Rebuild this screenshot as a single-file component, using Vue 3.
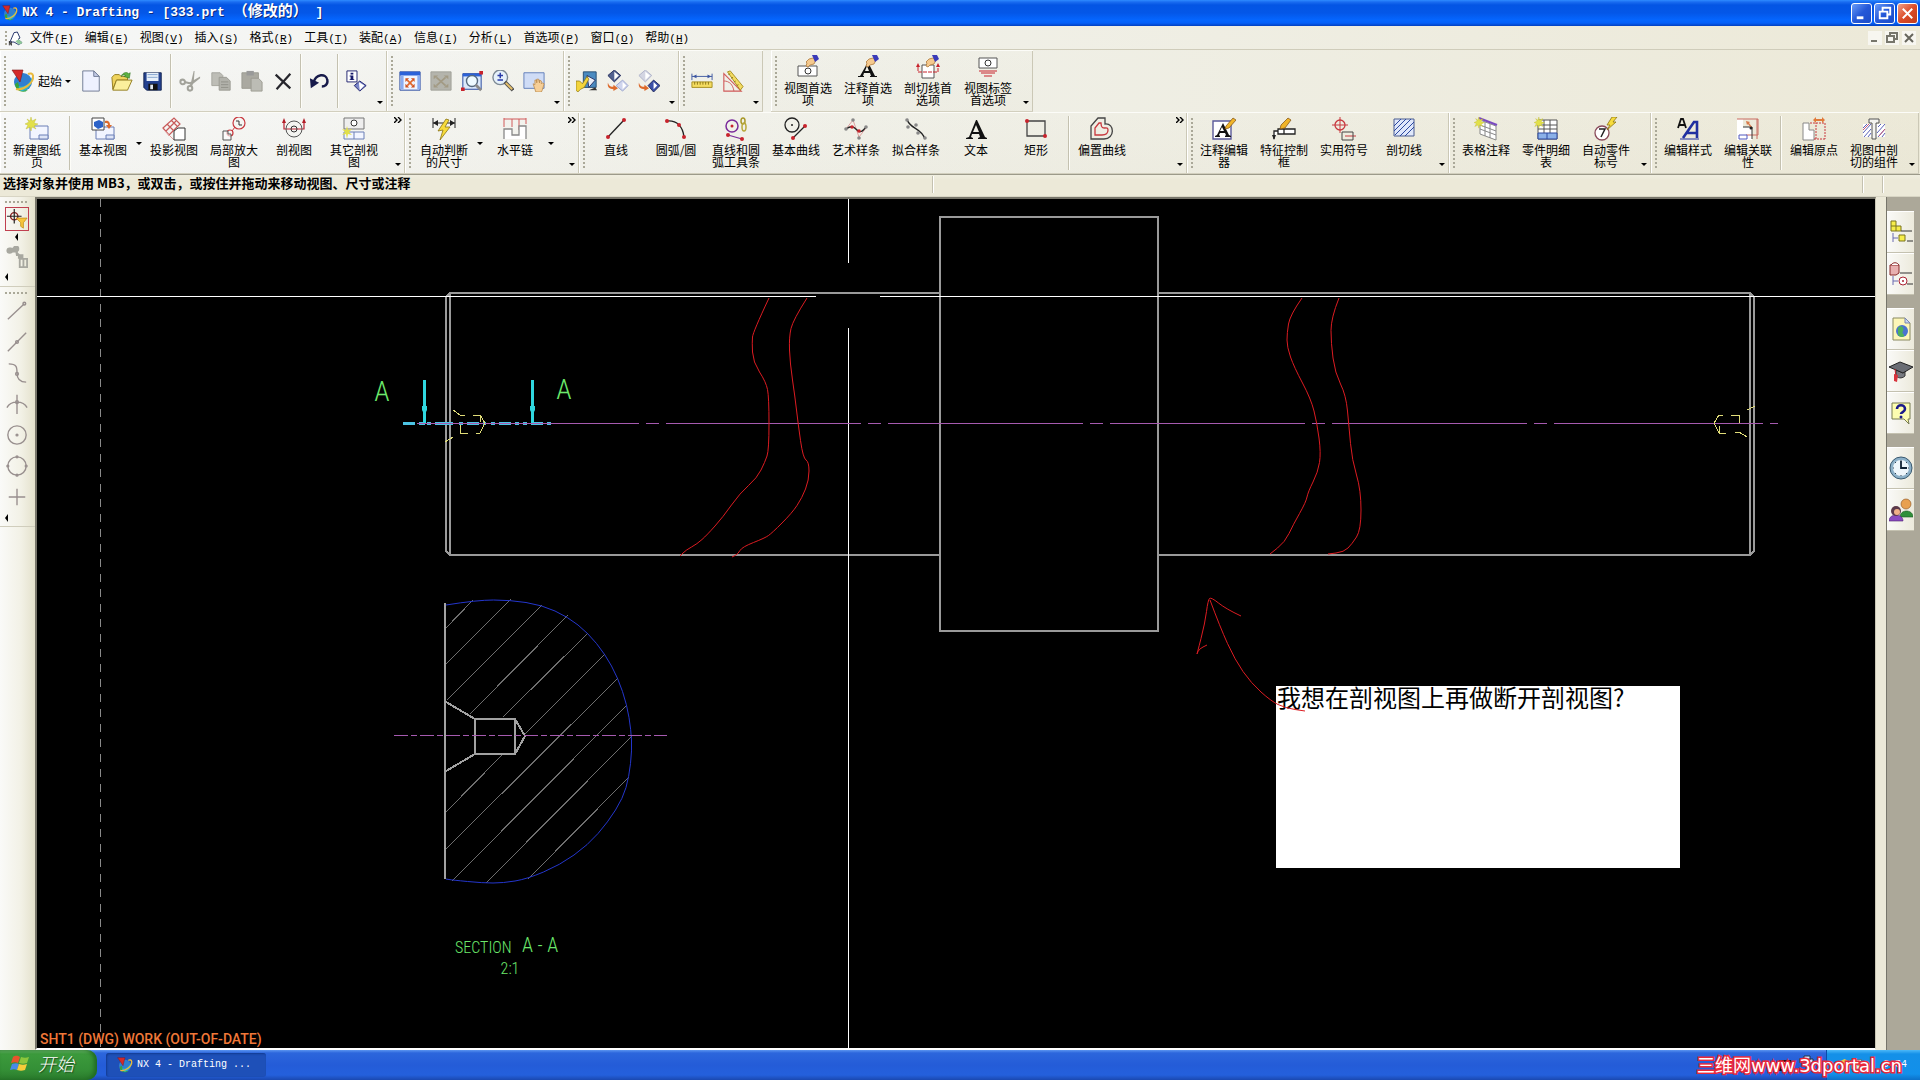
<script setup>
const menus = [
  ['文件', 'F'], ['编辑', 'E'], ['视图', 'V'], ['插入', 'S'], ['格式', 'R'], ['工具', 'T'],
  ['装配', 'A'], ['信息', 'I'], ['分析', 'L'], ['首选项', 'P'], ['窗口', 'O'], ['帮助', 'H'],
]

const hand = '<path d="M10 7l3-3 4-1 3 2-2 4-4 1-2 2-2-1 1-3z" fill="#f5c98e" stroke="#b07a3a" stroke-width=".8"/><path d="M16 0l5 0 2 4-4 3z" fill="#3a3ab8"/>'
const spark = '<path d="M6 0l1 4 4-2-2 4 4 1-4 2 2 3-4-2-1 4-1-4-4 2 2-4-3-1 4-2-2-3 3 2z" fill="#e2e04a" stroke="#b9b62e" stroke-width=".4"/>'
const bolt = 'fill="#f7dc3c" stroke="#8a7414" stroke-width=".8"'
const swoosh = '<circle cx="12" cy="13" r="9" fill="#2f7fd0"/><path d="M4 15a8 8 0 0 0 13 6c-5 1-9-2-10-8z" fill="#37a53c"/><path d="M8 17c5 2 11-2 13-9 1 7-4 13-9 14-3 0-5-2-4-5z" fill="#2db5c8"/><path d="M5 20C12 22 23 14 22 7c0-3-3-3-5-2" fill="none" stroke="#e9b93c" stroke-width="2"/><path d="M1 1l11 0-3 12z" fill="#d42a2a" stroke="#7d1414" stroke-width=".6"/>'

const icons = {
  nx: swoosh,
  app: '<path d="M3 18L9 4l5-1 4 9-3 2 6 5-5 3-7-4z" fill="#fff" stroke="#2c3a6e" stroke-width="1.5"/><path d="M11 17l5-3 6 5-5 3z" fill="#8fc79a"/><path d="M2 17v6M2 17l3 6v-6" fill="none" stroke="#111" stroke-width="1.2"/>',
  new: '<path d="M3 1h12l6 6v16H3z" fill="#eef1ff" stroke="#6b7690"/><path d="M15 1v6h6z" fill="#c4cce8" stroke="#6b7690"/>',
  open: '<path d="M1 8l3-3h5l2 2h7v4H6L2 21z" fill="#efd35c" stroke="#8f7a1c"/><path d="M6 11h17l-5 11H2z" fill="#fbef9c" stroke="#8f7a1c"/><path d="M11 7c2-5 7-5 8-3l2-1-1 6-6-2 2-1c-1-1-3-1-5 1z" fill="#5db143" stroke="#2f7420" stroke-width=".6"/>',
  save: '<path d="M2 3h19v19H5l-3-3z" fill="#23418f" stroke="#14244f"/><path d="M5 3h13v9H5z" fill="#e8f0fa"/><path d="M6 5h11M6 8h11" stroke="#7fa0cc"/><path d="M7 15h10v7H7z" fill="#111"/><path d="M9 16h3v5H9z" fill="#dfe6ef"/>',
  cut: '<path d="M13 14L16 1l1 0-1 13zM11 14l12-7 0 2-10 8z" fill="#a3a39b"/><g fill="none" stroke="#a3a39b" stroke-width="2.200"><path d="M6 13l8 2-1 3"/><circle cx="4" cy="13" r="2.500"/><circle cx="12" cy="20" r="2.500"/></g>',
  copy: '<path d="M2 3h9l3 3v11H2z" fill="#bdbdb6" stroke="#a3a39b"/><path d="M10 8h8l4 4v10H10z" fill="#b2b2ab" stroke="#999992"/><path d="M12 13h8M12 16h8M12 19h8" stroke="#8f8f88"/>',
  paste: '<path d="M1 3h18v17H1z" fill="#aaa9a1" stroke="#9a9991"/><path d="M6 1h8v5H6z" fill="#999"/><path d="M11 9h8l4 4v10H11z" fill="#bcbcb5" stroke="#9a9991"/>',
  del: '<path d="M4 5l16 15M20 4L5 21" stroke="#26262c" stroke-width="2.400" fill="none"/>',
  undo: '<path d="M5 14C7 4 19 3 20 11c1 5-3 7-6 7" fill="none" stroke="#171a4a" stroke-width="2.600"/><path d="M1 9l10 5-9 6z" fill="#171a4a"/>',
  info: '<path d="M1 1h11v12H1z" fill="#fff" stroke="#171a6a"/><path d="M5 3h3v2H5zM5 6h3v4h1v1H4v-1h1V7H4V6z" fill="#171a6a"/><path d="M15 12l7 5-7 6-6-6z" fill="#7a86c8" stroke="#171a6a"/><path d="M14 13l6 4-5 5z" fill="#fff"/>',
  fit: '<path d="M1 2h22v20H1z" fill="#eef4ff" stroke="#1c3f9a"/><path d="M1 2h22v4H1z" fill="#2c62d8"/><path d="M2 6h3v15H2zM20 6h3v15h-3z" fill="#8aacf0"/><path d="M9 11l6 6M15 11l-6 6" stroke="#e0672a" stroke-width="1.800"/><path d="M7 9h4l-4 4zM17 9h-4l4 4zM7 19h4l-4-4zM17 19h-4l4-4z" fill="#d0501c"/>',
  fitgray: '<path d="M1 2h22v20H1z" fill="#b4b4ac" stroke="#a0a098"/><path d="M7 8l10 9M17 8L7 17" stroke="#a29a84" stroke-width="2"/><path d="M4 6h5l-5 4zM20 6h-5l5 4zM4 19h5l-5-4zM20 19h-5l5-4z" fill="#a29a84"/>',
  zoomwin: '<path d="M2 4h20v17H2z" fill="#dbe9fb" stroke="#1c3f9a"/><path d="M2 4h20v3H2z" fill="#2c62d8"/><circle cx="12" cy="12" r="6" fill="#eefaff" stroke="#55697e" stroke-width="1.500"/><path d="M16 16l6 6" stroke="#8a8a8a" stroke-width="3"/><path d="M20 1h4v4h-4zM0 19h4v4H0z" fill="#c8232c"/>',
  zoom: '<circle cx="9" cy="8" r="8" fill="#e6f1fa" stroke="#7c8894" stroke-width="1.500"/><path d="M9 3v6M6 6h6M6 11h6" stroke="#2a3ba8" stroke-width="1.600"/><path d="M14 13l9 9" stroke="#555" stroke-width="4"/><path d="M15 14l7 7" stroke="#e8c16a" stroke-width="2"/>',
  pan: '<path d="M1 3h22v17H1z" fill="#cfdcf6" stroke="#5d7bb8"/><path d="M11 15l2 1V11l2 0 0 3V10l2 0 1 4V11l2 1 0 3 1-1 2 1-2 7-1 2h-6z" fill="#f6cf98" stroke="#b88648" stroke-width=".8"/>',
  shade: '<path d="M8 2h14v17H8z" fill="#4a8ac0" stroke="#24496e"/><path d="M12 6l9 5-7 8z" fill="#e9eef8" stroke="#222c60"/><path d="M14 22l9 0-2-3" fill="#333"/><path d="M0 12l4 0 3 3 5-8 2 3-5 9-4 2-3 3-2-2z" fill="#f3d43c" stroke="#8a7414" stroke-width=".8"/>',
  rot1: '<path d="M8 0l7 6-7 7-7-7z" fill="#51608f" stroke="#20295a"/><path d="M8 2l5 4-5 5z" fill="#fff"/><path d="M17 11l6 6-6 6-7-6z" fill="#cfd5ee" stroke="#98a2cc"/><path d="M17 13l4 4-4 4z" fill="#fff"/><path d="M1 14c1 4 4 5 6 4v-2l5 4-5 3v-2c-4 0-7-2-6-7z" fill="#dd6a2c"/>',
  rot2: '<path d="M8 0l7 6-7 7-7-7z" fill="#d3d5e2" stroke="#adb1c8"/><path d="M8 2l5 4-5 5z" fill="#fff"/><path d="M17 11l7 6-7 7-6-7z" fill="#3c50a8" stroke="#20295a"/><path d="M17 13l4 4-4 4z" fill="#fff"/><path d="M1 14c1 4 4 5 6 4v-2l5 4-5 3v-2c-4 0-7-2-6-7z" fill="#dd6a2c"/>',
  ruler: '<path d="M1 4v7M23 4v7M1 7h22" stroke="#3a54a0" fill="none"/><path d="M2 7l4-2v4zM22 7l-4-2v4z" fill="#3a54a0"/><path d="M1 13h22v6H1z" fill="#f4dc62" stroke="#a48c1c"/><path d="M4 13v3M7 13v3M10 13v3M13 13v3M16 13v3M19 13v3" stroke="#8a7414"/>',
  angle: '<path d="M2 4v19h19z" fill="none" stroke="#d05a5a" stroke-width="1.200"/><path d="M2 12c6 0 10 4 11 11" fill="none" stroke="#d05a5a"/><path d="M6 2l3-1 14 17-3 4z" fill="#f4dc62" stroke="#a48c1c"/><path d="M9 4l-2 1M12 8l-2 1M15 12l-2 1M18 16l-2 1" stroke="#8a7414"/>',
  viewpref: '<path d="M2 11h19v10H2z" fill="#fff" stroke="#555"/><circle cx="12" cy="16" r="3" fill="none" stroke="#333"/>' + hand,
  notepref: '<path d="M2 22h6v-1l-1 0 1-3h6l1 3-1 0v1h7v-1l-2 0L12 7 4 21l-2 0zM9 16l2-5 2 5z" fill="#111"/>' + hand,
  secpref: '<path d="M6 10h12v13H6z" fill="#fff" stroke="#555"/><path d="M2 12v5h20v-5" fill="none" stroke="#c8232c" stroke-dasharray="4 1"/><path d="M0 12l2-4 2 4zM20 12l2-4 2 4z" fill="#c8232c"/>' + hand,
  lblpref: '<path d="M3 3h18v10H3z" fill="#fff" stroke="#555"/><circle cx="12" cy="8" r="3" fill="none" stroke="#333"/><path d="M3 16h18M5 18h14M8 21h8" stroke="#c8232c" stroke-width="1.200"/>',
  newsheet: '<path d="M5 9h18v13H5z" fill="#f2f5ff" stroke="#6a7fb6"/><path d="M14 18h9v4h-9z" fill="#dde4f6" stroke="#6a7fb6"/>' + spark,
  baseview: '<path d="M5 10h18v12H5z" fill="#f2f5ff" stroke="#6a7fb6"/><path d="M15 18h8v4h-8z" fill="#dde4f6" stroke="#6a7fb6"/><path d="M1 1h12v12H1z" fill="#fff" stroke="#444"/><path d="M3 5l5-2 4 2v5l-5 2-4-3z" fill="#2c62c8"/><path d="M14 4c4-1 5 2 5 4h2l-3 4-3-4h2c0-2-1-2-3-2z" fill="#dd6a2c"/>',
  projview: '<path d="M1 11L12 1l6 6L7 18zM5 7l6 6M9 3l6 6M4 14l10-10" fill="none" stroke="#c85a5a" stroke-width="1.200"/><path d="M1 12l11 11" stroke="#d99" /><path d="M12 23V14l4-3h7v12z" fill="#fff" stroke="#333"/>',
  detail: '<circle cx="17" cy="6" r="6" fill="none" stroke="#c8383e" stroke-width="1.200"/><path d="M14 4h3v4h3" fill="none" stroke="#333"/><circle cx="8" cy="16" r="3" fill="none" stroke="#c8383e" stroke-width="1.200"/><path d="M10 14l3-4" stroke="#c8383e"/><path d="M1 14h5v3h3v6H1z" fill="#fff" fill-opacity=".6" stroke="#555"/>',
  section: '<path d="M2 4v8h20V4" fill="none" stroke="#b23" stroke-width="1.200"/><path d="M0 6l2-5 2 5zM20 6l2-5 2 5z" fill="#b21e28"/><circle cx="12" cy="12" r="8" fill="none" stroke="#555"/><circle cx="12" cy="12" r="3" fill="none" stroke="#333"/>',
  othersec: '<path d="M2 1h20v11H2z" fill="#eee" stroke="#777"/><circle cx="12" cy="6" r="3" fill="#fff" stroke="#333"/><path d="M2 15h20v7H2zM12 15v7" fill="#f2f5ff" stroke="#6a7fb6"/><path d="M5 9l1 4 4-1-3 3 3 3-4-1-1 5-1-5-4 1 3-3-3-3 4 1z" fill="#e2e04a"/>',
  autodim: '<path d="M1 1v10M23 1v10M1 6h22" stroke="#222" fill="none"/><path d="M1 6l5-3v6zM23 6l-5-3v6z" fill="#222"/><path d="M14 2L6 14l5-1-3 10 10-13-5 0 4-7z" ' + bolt + '/>',
  chain: '<path d="M1 1v9M23 1v6M1 2h22M9 2v8M16 2v11" stroke="#d05a5a" fill="none"/><path d="M1 22V12h8v6h7v-9h7v13" fill="#fff" stroke="#888" stroke-width="1.300"/>',
  line: '<path d="M4 20L20 3" stroke="#222" stroke-width="1.300"/><circle cx="4" cy="20" r="2" fill="#c8232c"/><circle cx="20" cy="3" r="2" fill="#c8232c"/>',
  arc: '<path d="M3 4c10-1 16 6 17 16" fill="none" stroke="#222" stroke-width="1.400"/><circle cx="3" cy="4" r="2" fill="#c8232c"/><circle cx="15" cy="8" r="2" fill="#c8232c"/><circle cx="20" cy="20" r="2" fill="#c8232c"/>',
  linearc: '<circle cx="8" cy="9" r="6" fill="none" stroke="#7a2a9a" stroke-width="1.500"/><circle cx="8" cy="9" r="1.500" fill="#c8232c"/><path d="M4 18l14 4" stroke="#7a2a9a" stroke-width="1.300"/><circle cx="4" cy="18" r="2" fill="#c8232c"/><circle cx="18" cy="22" r="2" fill="#c8232c"/><ellipse cx="19" cy="4" rx="2" ry="3" fill="none" stroke="#a8982a" stroke-width="1.500"/><ellipse cx="20" cy="10" rx="2" ry="4" fill="none" stroke="#b8a83a" stroke-width="1.500"/>',
  basic: '<circle cx="8" cy="8" r="7" fill="none" stroke="#222" stroke-width="1.300"/><circle cx="8" cy="8" r="1" fill="#222"/><path d="M9 21L21 9" stroke="#222" stroke-width="1.300"/><circle cx="9" cy="21" r="2" fill="#c8232c"/><circle cx="21" cy="9" r="2" fill="#c8232c"/>',
  spline: '<path d="M2 12l7-9 6 17 7-9" fill="none" stroke="#e0a0a0"/><path d="M2 12c6-4 8-2 11 1s5 2 9-3" fill="none" stroke="#222" stroke-width="1.300"/><g fill="#888"><circle cx="2" cy="12" r="1.800"/><circle cx="9" cy="3" r="1.800"/><circle cx="15" cy="21" r="1.800"/><circle cx="22" cy="10" r="1.800"/></g><circle cx="8" cy="10" r="1.800" fill="#c8232c"/><circle cx="15" cy="14" r="1.800" fill="#c8232c"/>',
  fitspline: '<path d="M3 2c2 10 14 8 18 20" fill="none" stroke="#222" stroke-width="1.300"/><g fill="#888"><circle cx="3" cy="3" r="1.800"/><circle cx="4" cy="10" r="1.800"/><circle cx="12" cy="8" r="1.800"/><circle cx="14" cy="16" r="1.800"/><circle cx="21" cy="21" r="1.800"/></g>',
  text: '<path d="M2 22h7v-1l-2-1 1-3h7l1 3-2 1v1h9v-1l-2-1L13 3h-1L5 20l-3 1zM9 15l3-7 3 7z" fill="#111"/>',
  rect: '<path d="M3 4h18v15H3z" fill="none" stroke="#444" stroke-width="1.300"/><circle cx="3" cy="4" r="2" fill="#c8232c"/><circle cx="21" cy="19" r="2" fill="#c8232c"/>',
  offset: '<path d="M1 22V9l7-8h7v6c10-1 10 15-1 15z" fill="none" stroke="#444" stroke-width="1.300"/><path d="M5 18v-7l4-5h2c0 9 7 2 7 7 0 4-3 5-6 5z" fill="none" stroke="#c8383e" stroke-width="1.300"/>',
  noteedit: '<path d="M1 4h18v18H1z" fill="#fff" stroke="#5a5a9a" stroke-width="1.400"/><path d="M3 20h5v-1l-1-1 1-2h5l1 2-1 1v1h6v-1l-2-1L11 6 5 18l-2 1zM8 14l2-4 2 4z" fill="#111"/><path d="M14 9L21 1l3 2-7 8-4 1z" fill="#f0b428" stroke="#7a4a10" stroke-width=".7"/>',
  fcf: '<path d="M2 22V14h4M6 12h17v5H6zM12 12v5" fill="#fff" stroke="#222" stroke-width="1.300"/><path d="M0 18h4l-2 5z" fill="#222"/><path d="M9 8L16 1l3 2-6 8-5 1z" fill="#f0b428" stroke="#7a4a10" stroke-width=".7"/>',
  symbol: '<circle cx="8" cy="8" r="5" fill="none" stroke="#c8383e" stroke-width="1.300"/><path d="M8 0v16M0 8h16M13 19h11" stroke="#c8383e"/><path d="M10 15h11v8H10z" fill="none" stroke="#444"/>',
  hatch: '<path d="M2 2h20v17H2z" fill="#dfe7fa" stroke="#4a5d90"/><path d="M2 9l7-7M2 14L14 2M3 18L19 2M8 19L22 5M13 19l9-9" stroke="#2c49a0"/>',
  table: '<path d="M6 3l16 6v14L6 17zM6 8l16 6M6 12l16 6M11 5v14M16 7v14" fill="#fff" stroke="#888"/><path d="M5 1l18 7" stroke="#7a4ac0" stroke-width="2"/><g transform="scale(.8)">' + spark + '</g>',
  parts: '<path d="M4 3h19v19H4zM4 8h19M4 12h19M10 3v13M16 3v13" fill="#fff" stroke="#555"/><path d="M4 16h19v6H4z" fill="#8ab0e8" stroke="#2c49a0"/><path d="M13 16v6" stroke="#2c49a0"/><g transform="scale(.8)">' + spark + '</g>',
  balloon: '<circle cx="8" cy="16" r="7" fill="#fff" stroke="#8a4a5a" stroke-width="1.300"/><path d="M5 12h6l-4 8" fill="none" stroke="#222" stroke-width="1.500"/><path d="M18 0l-5 8 3 0-3 5 9-8-3 0 4-5z" ' + bolt + '/>',
  style: '<path d="M2 11L5 2h2l3 9M3 8h6" fill="none" stroke="#111" stroke-width="1.800"/><path d="M7 21l11-16h3v16M11 16h9" fill="none" stroke="#2030a0" stroke-width="2.600"/><path d="M4 22h19" stroke="#2030a0"/>',
  assoc: '<path d="M1 2h6v8h9v13H1z" fill="#fff"/><path d="M1 2h21v16H10M21 2v20" fill="none" stroke="#c86a60"/><path d="M7 10h9v12" fill="none" stroke="#333"/><path d="M3 18h8v4H3z" fill="#fff" stroke="#5058c0"/><path d="M10 4l4 1-1 1 3 4-1 1-3-4-1 1z" fill="#d87a4a"/><circle cx="15" cy="11" r="1.500" fill="#222"/>',
  origin: '<path d="M1 6h6v7h5v10H1z" fill="#fff" stroke="#888"/><path d="M14 22V6M23 6v16M8 6h15M12 22h11" stroke="#c8383e" stroke-dasharray="2 1"/><path d="M11 3l3-3v2h6V0l3 3-3 3V4h-6v2z" fill="#e07a3a"/>',
  incomp: '<path d="M1 7h22v13H1z" fill="#fff"/><path d="M1 11l4-4M1 16l8-9M2 20l7-8M6 20l3-4M16 10l3-3M15 16l8-9M16 20l7-8M20 20l3-4" stroke="#5a62b8"/><path d="M1 13l6-6M17 19l6-7" stroke="#c85a7a"/><path d="M7 2h10v4h-3v16h-4V6H7z" fill="#f4f4f0" stroke="#555"/>',
  filter: '<circle cx="9" cy="9" r="4" fill="none" stroke="#8a2020" stroke-width="1.500"/><path d="M9 1v16M1 9h16" stroke="#222" stroke-width="1.300"/><path d="M11 11h12l-4 5v6l-3-2v-4z" fill="#f7c53c" stroke="#c08a14" stroke-width=".8"/>',
  snapgray: '<g fill="#a8a8a0"><circle cx="4" cy="5" r="3.500"/><circle cx="11" cy="3" r="3.500"/><path d="M4 2h9v5H4zM10 5l5 4-4 2zM13 9h6v5h-6z"/></g><path d="M15 14h8v9h-8zM19 14v9" fill="none" stroke="#a8a8a0" stroke-width="2"/>',
  s1: '<path d="M2 21L20 4"/><circle cx="20" cy="4" r="1.500"/>',
  s2: '<path d="M2 22L22 2"/><circle cx="12" cy="12" r="1.500"/>',
  s3: '<path d="M3 2c9 0 9 4 9 10s2 10 10 10"/><circle cx="12" cy="13" r="1.500"/>',
  s4: '<path d="M1 16C5 8 19 8 23 16M12 2v21"/><circle cx="12" cy="10" r="1.500"/>',
  s5: '<circle cx="12" cy="12" r="10"/><circle cx="12" cy="12" r="1"/>',
  s6: '<circle cx="12" cy="12" r="10"/><circle cx="12" cy="2" r="1"/><circle cx="12" cy="22" r="1"/><circle cx="2" cy="12" r="1"/><circle cx="22" cy="12" r="1"/>',
  s7: '<path d="M12 3v18M3 12h18"/>',
  asm: '<path d="M2 1h5v5h5v5H2zM2 6h5v5" fill="#f7ee4a" stroke="#7a741c"/><path d="M12 11h11M18 21h6" stroke="#333" stroke-width="1.200"/><path d="M4 13v9M4 18h5" stroke="#6a6ab0" fill="none"/><path d="M10 15h6v6h-6z" fill="#f7ee4a" stroke="#7a741c"/>',
  part: '<path d="M1 3h9v8l-3 2H1z" fill="#e8b0b0" stroke="#8a2a2a"/><path d="M2 3c2-3 6-3 8 0" fill="#fff" stroke="#8a2a2a"/><path d="M11 11h12M18 22h6" stroke="#333" stroke-width="1.200"/><path d="M4 14v9M4 19h5" stroke="#6a6ab0" fill="none"/><circle cx="14" cy="19" r="4" fill="#fff" stroke="#a23"/><circle cx="14" cy="19" r="1" fill="#a23"/>',
  web: '<path d="M4 1h12l5 5v17H4z" fill="#fdf6b8" stroke="#8a8a60"/><path d="M16 1v5h5z" fill="#c9d6f2" stroke="#7a86b0"/><circle cx="13" cy="14" r="6" fill="#4a72d0"/><path d="M9 11c3-4 7 0 5 3s2 3 1 5-6 1-6-2z" fill="#4fb05c"/>',
  edu: '<path d="M7 11v6c3 3 7 2 9 0v-5l-2 2z" fill="#777a80" stroke="#333"/><path d="M0 8l11-5 13 5-10 6z" fill="#6a6d74" stroke="#222"/><path d="M6 10l1 8" stroke="#c8232c"/><path d="M5 15l4 1-1 7-3-1z" fill="#d8333c"/>',
  help: '<path d="M3 2h18v16h-2l1 5-5-5H3z" fill="#fdfdb0" stroke="#777a50"/><path d="M8 8c0-5 8-5 8 0 0 3-4 3-4 5" fill="none" stroke="#1a1a8a" stroke-width="2.600"/><circle cx="12" cy="16" r="1.500" fill="#1a1a8a"/>',
  clock: '<circle cx="12" cy="12" r="11" fill="#8cb0c8" stroke="#3a5a70"/><circle cx="12" cy="12" r="8" fill="#eef6fb"/><path d="M12 5v7h6" fill="none" stroke="#123" stroke-width="1.800"/><path d="M12 4v1M12 19v1M4 12h1M19 12h1M6 6l1 1M17 17l1 1M17 7l1-1M6 18l1-1" stroke="#345"/>',
  people: '<path d="M11 19c0-8 13-8 13 0z" fill="#2f8f3a" stroke="#1c5a24" stroke-width=".6"/><circle cx="17" cy="6" r="5" fill="#e8a050" stroke="#8a5020" stroke-width=".6"/><path d="M0 23c0-8 14-8 14 0z" fill="#8a4ac0" stroke="#4a2070" stroke-width=".6"/><circle cx="7" cy="13" r="5" fill="#5c3a4a"/><circle cx="8" cy="14" r="3" fill="#f0b088"/>',
}

const row1 = [
  { items: [
    { t: 'start', i: 'nx', l: '起始' }, { i: 'new' }, { i: 'open' }, { i: 'save' }, { t: 'sep' },
    { i: 'cut' }, { i: 'copy' }, { i: 'paste' }, { i: 'del' }, { t: 'sep' }, { i: 'undo' }, { t: 'sep' }, { i: 'info' },
  ] },
  { items: [{ i: 'fit' }, { i: 'fitgray' }, { i: 'zoomwin' }, { i: 'zoom' }, { i: 'pan' }] },
  { items: [{ i: 'shade' }, { i: 'rot1' }, { i: 'rot2' }] },
  { items: [{ i: 'ruler' }, { i: 'angle' }] },
  { apart: true, items: [
    { i: 'viewpref', l: '视图首选项' }, { i: 'notepref', l: '注释首选项' },
    { i: 'secpref', l: '剖切线首选项' }, { i: 'lblpref', l: '视图标签首选项' },
  ] },
]

const row2 = [
  { more: true, items: [
    { i: 'newsheet', l: '新建图纸页' }, { t: 'sep' }, { i: 'baseview', l: '基本视图' }, { t: 'drop' },
    { i: 'projview', l: '投影视图' }, { i: 'detail', l: '局部放大图' }, { i: 'section', l: '剖视图' },
    { i: 'othersec', l: '其它剖视图' }, { t: 'gap', w: 6 },
  ] },
  { more: true, items: [
    { t: 'gap', w: 2 }, { i: 'autodim', l: '自动判断的尺寸' }, { t: 'drop' }, { i: 'chain', l: '水平链' }, { t: 'drop' },
    { t: 'gap', w: 8 },
  ] },
  { more: true, items: [
    { i: 'line', l: '直线' }, { i: 'arc', l: '圆弧/圆' }, { i: 'linearc', l: '直线和圆弧工具条' }, { i: 'basic', l: '基本曲线' },
    { i: 'spline', l: '艺术样条' }, { i: 'fitspline', l: '拟合样条' }, { i: 'text', l: '文本' }, { i: 'rect', l: '矩形' },
    { t: 'sep' }, { i: 'offset', l: '偏置曲线' }, { t: 'gap', w: 40 },
  ] },
  { items: [
    { i: 'noteedit', l: '注释编辑器' }, { i: 'fcf', l: '特征控制框' }, { i: 'symbol', l: '实用符号' }, { i: 'hatch', l: '剖切线' },
  ] },
  { items: [{ i: 'table', l: '表格注释' }, { i: 'parts', l: '零件明细表' }, { i: 'balloon', l: '自动零件标号' }] },
  { items: [
    { i: 'style', l: '编辑样式' }, { i: 'assoc', l: '编辑关联性' }, { t: 'sep' },
    { i: 'origin', l: '编辑原点' }, { i: 'incomp', l: '视图中剖切的组件' },
  ] },
]

const snaps = ['s1', 's2', 's3', 's4', 's5', 's6', 's7']
const tabs = [['asm', 'part'], ['web', 'edu', 'help'], ['clock', 'people']]

// Rounds a hand-placed polyline off through the midpoints of its sides.
function smooth(points) {
  const p = points.split(' ').map(s => s.split(',').map(Number))
  let d = `M${p[0]}`
  for (let k = 1; k < p.length - 1; k++) {
    d += `Q${p[k]} ${(p[k][0] + p[k + 1][0]) / 2},${(p[k][1] + p[k + 1][1]) / 2}`
  }
  return d + `L${p[p.length - 1]}`
}

const breaks = [
  '769,298 753,332 752,342 753,362 766,382 769,397 769,450 765,462 757,478 740,493 723,517 707,535 697,544 686,550 680,556',
  '807,298 793,320 789,337 790,363 795,397 798,423 803,458 809,462 809,480 802,498 792,513 772,533 765,538 742,547 738,554 732,557',
  '1302,298 1290,315 1287,333 1287,347 1294,367 1311,399 1317,423 1321,453 1318,472 1308,492 1306,502 1293,525 1285,542 1270,554',
  '1339,298 1331,318 1331,343 1335,373 1346,395 1349,427 1352,460 1361,490 1361,530 1352,544 1344,552 1328,554',
  '1241,616 1226,609 1211,597 1208,600 1205,623 1197,654 1197,654 1199,649 1207,645',
  '1210,600 1220,627 1235,660 1251,683 1271,701 1285,708 1305,711',
].map(smooth)

const boundary = smooth('446,605 477,600 510,600 542,605 568,617 588,633 605,654 618,678 627,705 631,730 632,750 629,777 623,798 608,822 588,845 560,865 527,879 503,883 483,883 452,880 446,879')

const hatch = [
  [446, 628, 473, 600], [446, 664, 511, 599], [447, 700, 542, 605], [470, 714, 568, 615],
  [503, 717, 588, 633], [524, 735, 605, 654], [446, 812, 503, 754], [446, 849, 618, 678],
  [452, 881, 627, 705], [486, 883, 632, 736], [528, 879, 629, 777],
]
</script>

<template>
  <div class="window">
    <header class="title">
      <svg class="i16" viewBox="0 0 24 24" v-html="icons.nx"></svg>
      <h1>NX 4 - Drafting - [333.prt <span>（修改的）</span> ]</h1>
      <div class="controls">
        <button aria-label="最小化"><svg viewBox="0 0 20 20"><path d="M5 13h7v3H5z" fill="#fff" /></svg></button>
        <button aria-label="还原"><svg viewBox="0 0 20 20"><path d="M8 7V4h8v7h-3M5 8h8v7H5z" fill="none" stroke="#fff" stroke-width="2" /></svg></button>
        <button class="close" aria-label="关闭"><svg viewBox="0 0 20 20"><path d="M5 5l10 10M15 5L5 15" stroke="#fff" stroke-width="2" /></svg></button>
      </div>
    </header>

    <nav class="menu">
      <i class="grip"></i>
      <svg class="i16" viewBox="0 0 24 24" v-html="icons.app"></svg>
      <button v-for="m in menus" :key="m[1]">{{ m[0] }}<span>(<u>{{ m[1] }}</u>)</span></button>
      <div class="mdi">
        <button aria-label="最小化文档"><svg viewBox="0 0 14 14"><path d="M3 9h6v2H3z" fill="#77766c" /></svg></button>
        <button aria-label="还原文档"><svg viewBox="0 0 14 14"><path d="M5 5V2h7v6H9M2 5h7v6H2z" fill="none" stroke="#77766c" stroke-width="2" /></svg></button>
        <button aria-label="关闭文档"><svg viewBox="0 0 14 14"><path d="M3 3l8 8M11 3l-8 8" stroke="#66655c" stroke-width="2" /></svg></button>
      </div>
    </nav>

    <div v-for="(row, r) in [row1, row2]" :key="r" class="row">
      <section v-for="(b, k) in row" :key="k" class="band" :class="{ apart: b.apart }">
        <i class="grip"></i>
        <template v-for="(it, n) in b.items" :key="n">
          <i v-if="it.t === 'sep'" class="sep"></i>
          <i v-else-if="it.t === 'gap'" :style="{ width: it.w + 'px' }"></i>
          <button v-else-if="it.t === 'drop'" class="drop" aria-label="下拉"><i class="tri"></i></button>
          <button v-else-if="it.t === 'start'" class="start-menu">
            <svg class="i24" viewBox="0 0 24 24" v-html="icons[it.i]"></svg>{{ it.l }}<i class="tri"></i>
          </button>
          <button v-else-if="it.l" class="tool">
            <svg class="i24" viewBox="0 0 24 24" v-html="icons[it.i]"></svg>
            <span>{{ it.l }}</span>
          </button>
          <button v-else class="small" :aria-label="it.i"><svg class="i22" viewBox="0 0 24 24" v-html="icons[it.i]"></svg></button>
        </template>
        <button class="over" aria-label="工具条选项">
          <svg v-if="b.more" viewBox="0 0 8 6"><path d="M0 0l3 3-3 3M4 0l3 3-3 3" fill="none" stroke="#000" stroke-width="1.400" /></svg>
          <i class="tri"></i>
        </button>
      </section>
    </div>

    <div class="status">
      <p>选择对象并使用 MB3，或双击，或按住并拖动来移动视图、尺寸或注释</p>
      <i class="cell main-cell"></i><i class="cell"></i><i class="cell end-cell"></i>
    </div>

    <main>
      <aside class="snap">
        <div class="group">
          <i class="hgrip"></i>
          <button class="active" aria-label="选择过滤器"><svg class="i22" viewBox="0 0 24 24" v-html="icons.filter"></svg></button>
          <i class="ltri mid"></i>
          <button aria-label="捕捉"><svg class="i22" viewBox="0 0 24 24" v-html="icons.snapgray"></svg></button>
          <i class="ltri"></i>
        </div>
        <div class="group points">
          <i class="hgrip"></i>
          <button v-for="s in snaps" :key="s" :aria-label="s"><svg class="i22" viewBox="0 0 24 24" fill="none" stroke="#988f8e" stroke-width="1.5" v-html="icons[s]"></svg></button>
          <i class="ltri"></i>
        </div>
      </aside>

      <div class="canvas">
        <svg viewBox="37 199 1838 849">
          <path d="M100 199V1048" stroke="#8a8a8a" stroke-dasharray="8 7" class="px" />

          <g class="px" fill="none" stroke="#9a9a9a" stroke-width="2">
            <path d="M940 293H450L446 297V551L450 555H940M450 293V555" />
            <path d="M1158 293H1750L1754 297V551L1750 555H1158M1750 293V555" />
            <path d="M940 217H1158V631H940Z" />
          </g>

          <g fill="#fff" class="px">
            <path d="M37 296h779v1h-779zM880 296h995v1h-995zM848 199h1v64h-1zM848 328h1v720h-1z" />
          </g>

          <path class="px" d="M403 423h12M419 423h6M427 423h4M435 423h18M459 423h4M467 423h12M483 423h3M491 423h4M499 423h12M515 423h4M523 423h4M531 423h12M547 423h4" stroke="#4cc4e4" stroke-width="3" />
          <path class="px" d="M424 380V423M532 380V423" stroke="#30d8e0" stroke-width="3" />
          <path d="M422 406h5v4l-2 4h-1l-2-4zM530 406h5v4l-2 4h-1l-2-4z" fill="#30d8e0" />
          <path class="px" d="M417 423H639M646 423h13M666 423H861M868 423h13M888 423H1083M1090 423h13M1110 423H1305M1312 423h13M1332 423H1527M1534 423h13M1554 423H1763M1770 423H1778" stroke="#a65ab0" />

          <g fill="none" stroke="#e0dc78" class="px">
            <path d="M453 410L460 415H465M473 415H480V422M480 415L485 423L480 433H476M460 425V433H468M445 442L453 437" />
            <path d="M1723 415H1719L1714 423L1719 433H1726M1719 426V433M1731 415H1739V423M1735 432H1739L1747 437M1747 410L1755 406" />
          </g>

          <g class="cad">
            <text x="382" y="401" text-anchor="middle" class="big">A</text>
            <text x="564" y="399" text-anchor="middle" class="big">A</text>
            <text x="455" y="953" class="mid">SECTION</text>
            <text x="522" y="952" class="large">A - A</text>
            <text x="510" y="974" text-anchor="middle" class="mid">2:1</text>
          </g>

          <path class="px" v-for="(h, n) in hatch" :key="n" :d="`M${h[0]} ${h[1]}L${h[2]} ${h[3]}`" stroke="#6e6e6e" />
          <path :d="boundary" fill="none" stroke="#2436cc" />
          <g class="px" fill="none" stroke="#a2a2a2" stroke-width="2">
            <path d="M445 603V879M475 719V754M515 719V754" />
            <path d="M446 702L475 719H515L525 736L515 754H475L446 771" />
          </g>
          <path class="px" d="M394 735H667" stroke="#a65ab0" stroke-dasharray="14 3 6 3" />

          <rect x="1276" y="686" width="404" height="182" fill="#fff" />
          <text x="1277" y="707" class="note">我想在剖视图上再做断开剖视图?</text>
          <path v-for="(d, n) in breaks" :key="n" :d="d" fill="none" stroke="#dc1c22" />
          <text x="40" y="1044" class="sheet">SHT1 (DWG) WORK (OUT-OF-DATE)</text>
        </svg>
      </div>

      <aside class="resource">
        <div v-for="(g, n) in tabs" :key="n" class="tabs">
          <button v-for="t in g" :key="t" :aria-label="t"><svg class="i24" viewBox="0 0 24 24" v-html="icons[t]"></svg></button>
        </div>
      </aside>
    </main>

    <footer class="taskbar">
      <button class="start">
        <svg viewBox="0 0 20 18"><path d="M3 3c3-2 5-1 7 0L8 9C6 8 4 8 1 9z" fill="#e8542c" /><path d="M11 3c3 1 5 1 8 0l-2 6c-3 1-5 1-8 0z" fill="#8cc63c" /><path d="M1 10c3-1 5-1 7 0l-2 6c-2-1-4-1-7 0z" fill="#4a8ae8" transform="translate(1 0)" /><path d="M9 10c3 1 5 1 8 0l-2 6c-3 1-5 1-8 0z" fill="#f6cc3a" /></svg>
        开始
      </button>
      <button class="task"><svg class="i16" viewBox="0 0 24 24" v-html="icons.nx"></svg>NX 4 - Drafting ...</button>
      <div class="tray">
        <svg viewBox="0 0 80 24"><circle cx="6" cy="12" r="6" fill="#3f7fe0" /><path d="M20 6l6-3 6 3v9l-6 5-6-5z" fill="#e8c84a" /><path d="M36 4h15v14H36z" fill="#e6f0e6" stroke="#456" /><path d="M38 16l5-9 3 6 4-7" fill="none" stroke="#2f7f3a" /></svg>
        <time>9:54</time>
      </div>
      <svg class="lang" viewBox="0 0 36 20"><path d="M1 6h10v9H1z" fill="#fff" stroke="#111" stroke-width="2" /><path d="M25 1h6v4h-6zM28 4h6v4h-6z" fill="#dbe8ff" stroke="#234" /></svg>
      <a class="mark" href="#">三维网www.3dportal.cn</a>
    </footer>
  </div>
</template>

<style>
body {
  margin: 0;
  background: #ece9d8;
}
</style>

<style scoped>
* {
  box-sizing: border-box;
}
.window {
  display: flex;
  flex-direction: column;
  min-height: 100vh;
  overflow: hidden;
  font: 12px/12px "Noto Sans CJK SC", sans-serif;
  color: #000;
}
button {
  margin: 0;
  padding: 0;
  border: 0;
  background: none;
  font: inherit;
  color: inherit;
}
svg {
  display: block;
  flex: none;
}
.i16 { width: 16px; height: 16px; }
.i22 { width: 22px; height: 22px; }
.i24 { width: 24px; height: 24px; }

.title {
  display: flex;
  align-items: center;
  gap: 4px;
  height: 26px;
  padding: 0 2px;
  background: linear-gradient(#2f8cff 0, #1a6cf0 2px, #0455e4 5px, #0457e8 13px, #0566ff 20px, #0560f8 23px, #0340c0 26px);
}
.title h1 {
  flex: 1;
  margin: 0;
  font: bold 13px/20px "Liberation Mono", "Noto Sans CJK SC", monospace;
  color: #fff;
  text-shadow: 1px 1px #0a2a80;
  white-space: pre;
}
.title h1 span {
  font-size: 15px;
}
.controls {
  display: flex;
  gap: 2px;
}
.controls button {
  width: 21px;
  height: 21px;
  border: 1px solid #fff;
  border-radius: 3px;
  background: linear-gradient(135deg, #6a9cf8, #2458d8 50%, #1c4cc8);
}
.controls svg {
  width: 19px;
  height: 19px;
}
.controls .close {
  background: linear-gradient(135deg, #f0a088, #dc4c28 50%, #c03c1c);
}

.menu {
  display: flex;
  align-items: center;
  gap: 11px;
  height: 24px;
  padding: 0 4px 0 5px;
  border-bottom: 1px solid #cfccba;
  background: linear-gradient(90deg, #f6f7f7, #f1f1ea 40%, #ece9d8);
}
.menu .grip {
  height: 14px;
  margin-right: -10px;
}
.menu > .i16 {
  margin-right: -5px;
}
.menu button span {
  font-family: "Liberation Mono", monospace;
  font-size: 11px;
}
.mdi {
  display: flex;
  gap: 3px;
  margin-left: auto;
}
.mdi button {
  width: 14px;
  height: 14px;
  background: #f7f6f0;
}

.row {
  display: flex;
  height: 62px;
  background: linear-gradient(90deg, #f7f8f8, #f0f0e8 45%, #ece9d8);
}
.band {
  display: flex;
  border-top: 1px solid #fcfcf8;
  border-bottom: 1px solid #d2cfbe;
  box-shadow: inset 1px 0 #fff, inset -1px 0 #cbc8b6;
  background: linear-gradient(#ffffff00, #dedac820);
}
.band.apart {
  margin-left: 8px;
}
.grip {
  flex: none;
  width: 2px;
  background: repeating-linear-gradient(#aaa898 0 2px, transparent 2px 4px);
}
.band .grip {
  height: 50px;
  margin: 5px 1px 0 4px;
}
.sep {
  width: 2px;
  margin: 3px 2px;
  background: linear-gradient(90deg, #c4c1b0 50%, #fdfdf8 50%);
}
.small {
  display: flex;
  align-items: center;
  justify-content: center;
  width: 31px;
}
.start-menu {
  display: flex;
  align-items: center;
  gap: 3px;
  width: 68px;
  padding-left: 4px;
}
.tri {
  width: 0;
  height: 0;
  border: 3px solid transparent;
  border-top-color: #000;
  border-bottom: 0;
}
.drop {
  display: flex;
  align-items: center;
  justify-content: center;
  width: 11px;
}
.tool {
  display: flex;
  flex-direction: column;
  align-items: center;
  gap: 3px;
  width: 60px;
  padding-top: 4px;
}
.tool span {
  width: 50px;
  word-break: break-all;
}
.over {
  display: flex;
  flex-direction: column;
  align-items: center;
  width: 15px;
  padding: 4px 0 7px;
}
.over svg {
  width: 8px;
  height: 6px;
}
.over .tri {
  margin-top: auto;
}

.status {
  display: flex;
  align-items: stretch;
  height: 23px;
  border-top: 1px solid #9c9a8a;
  border-bottom: 1px solid #d8d5c4;
  background: linear-gradient(#f0eee0, #ece9d8 5px);
}
.status p {
  flex: 931;
  margin: 0;
  padding-left: 3px;
  font-weight: bold;
  font-size: 13px;
  line-height: 16px;
  white-space: nowrap;
}
.cell {
  flex: 0 0 20px;
  margin: 1px 0 3px;
  border-left: 1px solid #c4c1b0;
  box-shadow: inset 1px 0 #fff;
}
.main-cell {
  flex: 931;
}
.end-cell {
  flex-basis: 38px;
}

main {
  display: flex;
  flex: 1;
}
.snap {
  flex: none;
  width: 35px;
  background: linear-gradient(90deg, #fafaf8, #f2f1e6 60%, #e4e1cc);
}
.group {
  display: flex;
  flex-direction: column;
  align-items: flex-start;
  height: 90px;
  padding: 4px 5px;
  border-bottom: 1px solid #d0cdbc;
}
.group.points {
  height: 240px;
}
.hgrip {
  flex: none;
  width: 24px;
  height: 2px;
  background: repeating-linear-gradient(90deg, #aaa898 0 2px, transparent 2px 4px);
}
.points .hgrip {
  margin: 1px 0;
}
.group button {
  display: flex;
  align-items: center;
  justify-content: center;
  flex: none;
  width: 24px;
  height: 24px;
}
.group .active {
  margin: 4px 0 2px;
  border: 1px solid #c04050;
}
.points button {
  height: 31px;
}
.ltri {
  flex: none;
  width: 0;
  height: 0;
  margin-top: 4px;
  border: 4px solid transparent;
  border-right: 3px solid #000;
  border-left: 0;
}
.ltri.mid {
  margin: 0 0 4px 10px;
}
.points .ltri {
  margin-top: 2px;
}

.canvas {
  flex: 1;
  min-width: 0;
  border: 2px solid #77756a;
  border-right: 1px solid #c9c6b5;
  border-bottom-color: #fff;
  background: #000;
}
.canvas svg {
  width: 100%;
  height: auto;
}
.px {
  shape-rendering: crispEdges;
}
.cad {
  fill: #6ce86c;
  font-family: "Roboto Condensed", "Liberation Sans Narrow", "Noto Sans CJK SC", sans-serif;
  font-weight: 300;
}
.cad .mid { font-size: 16px; }
.cad .large { font-size: 20px; }
.cad .big { font-size: 28px; }
.note {
  font: 24px "Noto Sans CJK SC", sans-serif;
}
.sheet {
  fill: #f07838;
  font: 500 14px Roboto, "Liberation Sans", sans-serif;
}

.resource {
  flex: none;
  display: flex;
  flex-direction: column;
  gap: 13px;
  width: 44px;
  padding: 14px 6px 0 11px;
  background: linear-gradient(90deg, #ece9d8 10px, #77756a 10px, #77756a 11px, #aca899 11px);
}
.tabs button {
  display: flex;
  align-items: center;
  justify-content: center;
  width: 27px;
  height: 42px;
  border-top: 1px solid #fff;
  border-bottom: 1px solid #c4c1b0;
  background: linear-gradient(90deg, #fafaf8, #eceadc);
}

.taskbar {
  position: relative;
  display: flex;
  align-items: center;
  height: 30px;
  background: linear-gradient(#5a94f0 0, #2c66dc 3px, #245cd8 15px, #2460dc 25px, #1a48b0 30px);
  color: #fff;
}
.start {
  display: flex;
  align-items: center;
  gap: 8px;
  width: 97px;
  height: 30px;
  padding: 0 0 4px 10px;
  border-radius: 0 10px 10px 0;
  background: linear-gradient(#6cb86c 0, #3c9a3c 4px, #348f36 20px, #2a7a2c 30px);
  box-shadow: inset -3px 0 4px #1f6a22;
  font-size: 18px;
  font-weight: 300;
  line-height: 24px;
  font-style: italic;
  text-shadow: 1px 1px 1px #1c4a1c;
}
.start svg {
  width: 20px;
  height: 18px;
}
.task {
  display: flex;
  align-items: center;
  gap: 4px;
  width: 160px;
  height: 24px;
  margin-left: 9px;
  padding-left: 11px;
  border-radius: 3px;
  background: #1e50b8;
  box-shadow: inset 1px 1px 2px #123a90;
  font: 10px/14px "Liberation Mono", monospace;
}
.tray {
  display: flex;
  align-items: center;
  gap: 2px;
  width: 94px;
  height: 30px;
  margin-left: auto;
  border-left: 1px solid #0c4ca8;
  background: linear-gradient(#4cb8f8 0, #1490e8 4px, #1290ea 24px, #0c70c8 30px);
}
.tray svg {
  width: 54px;
  height: 24px;
}
.tray time {
  font-family: "Liberation Mono", monospace;
  font-size: 10px;
}
.lang {
  position: absolute;
  right: 105px;
  top: 5px;
  width: 36px;
  height: 20px;
}
.mark {
  position: absolute;
  right: 18px;
  top: 4px;
  font: 18px/24px "DejaVu Sans", "Noto Sans CJK SC", sans-serif;
  color: #fff;
  text-decoration: none;
  -webkit-text-stroke: 3px #e8283a;
  paint-order: stroke fill;
}
</style>
